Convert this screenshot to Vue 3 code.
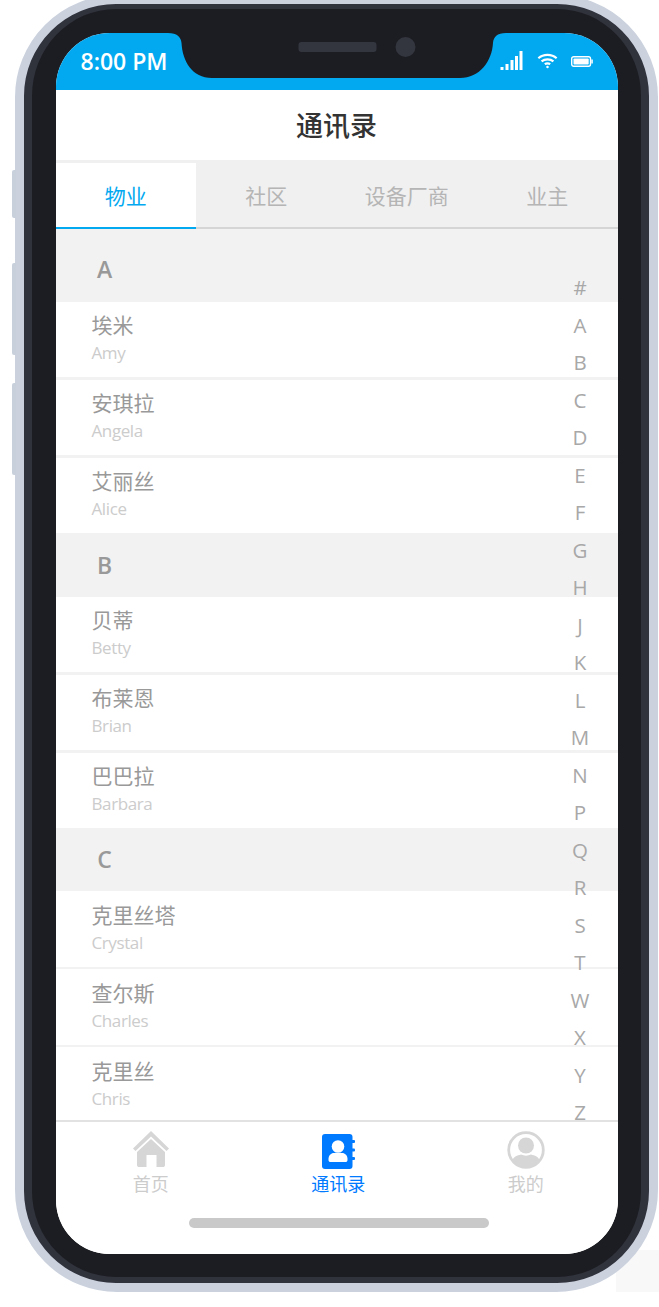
<template>
  <div class="page">
    <div class="corner-patch"></div>
    <div class="phone">
      <span class="side-btn mute"></span>
      <span class="side-btn vol-up"></span>
      <span class="side-btn vol-down"></span>
      <div class="bezel">
        <div class="screen">
          <div class="status">
            <span class="time">8:00 PM</span>
            <svg class="notch" viewBox="0 0 562 46" width="562" height="46">
              <path fill="#1c1d22" d="M112 0C121 0 125 4 125.5 10C126.5 28 136 45 156 45L404 45C424 45 436 28 437 10C437.5 4 441 0 450 0Z" />
              <rect x="242.5" y="9" width="78" height="10" rx="3" fill="#33353f" />
              <circle cx="349.5" cy="14" r="10" fill="#33353f" />
            </svg>
            <div class="status-icons">
              <svg width="23" height="20" viewBox="0 0 23 20" fill="#fff">
                <rect x="0.5" y="16" width="3" height="3" />
                <rect x="5.5" y="13" width="3" height="6" />
                <rect x="10.5" y="9" width="3" height="10" />
                <rect x="15" y="5" width="3" height="14" />
                <rect x="19.5" y="0" width="3" height="19" />
              </svg>
              <svg class="wifi" width="21" height="16" viewBox="0 0 23 17" fill="none" stroke="#fff" stroke-width="2.4">
                <path d="M1.5 5.5C7 0.5 16 0.5 21.5 5.5" />
                <path d="M5 9C8.5 6 14.5 6 18 9" />
                <path d="M8.5 12C10.3 10.8 12.7 10.8 14.5 12" />
                <circle cx="11.5" cy="15" r="1.4" fill="#fff" stroke="none" />
              </svg>
              <svg class="battery" width="22" height="11" viewBox="0 0 22 11">
                <rect x="0.7" y="0.7" width="18.8" height="9.6" rx="2" fill="none" stroke="#fff" stroke-width="1.4" />
                <rect x="2.5" y="2.5" width="15.2" height="6" rx="0.8" fill="#fff" />
                <rect x="20.3" y="3.5" width="1.5" height="4" fill="#fff" />
              </svg>
            </div>
          </div>

          <div class="header">通讯录</div>

          <div class="tabs">
            <div v-for="(t, i) in tabs" :key="t" class="tab" :class="{ active: i === 0 }">{{ t }}</div>
          </div>

          <div class="list">
            <section v-for="g in groups" :key="g.letter">
              <div class="group-head" :class="{ first: g.letter === 'A' }">
                <span>{{ g.letter }}</span>
              </div>
              <div v-for="p in g.people" :key="p.en" class="person" :class="{ thin: g.letter === 'C' }">
                <div class="cn">{{ p.cn }}</div>
                <div class="en">{{ p.en }}</div>
              </div>
            </section>
          </div>

          <div class="index">
            <span v-for="l in letters" :key="l">{{ l }}</span>
          </div>

          <div class="footer">
            <div class="nav">
              <div class="nav-item">
                <svg width="36" height="38" viewBox="0 0 36 38" fill="#d6d6d6">
                  <path d="M18 0L36 17.5L33.5 20L18 5.5L2.5 20L0 17.5Z" />
                  <path d="M18 8L32 21V34C32 35.5 31 36 30 36H23.5V24H13.5V36H6C5 36 4 35.5 4 34V21Z" />
                </svg>
                <span>首页</span>
              </div>
              <div class="nav-item current">
                <svg width="34" height="38" viewBox="0 0 34 38">
                  <rect x="0" y="3" width="30.5" height="35" rx="3" fill="#007aff" />
                  <rect x="29" y="9" width="4" height="3" rx="1" fill="#007aff" />
                  <rect x="29" y="17.5" width="4" height="3" rx="1" fill="#007aff" />
                  <rect x="29" y="26" width="4" height="3" rx="1" fill="#007aff" />
                  <circle cx="16" cy="15.5" r="6.3" fill="#fff" />
                  <path d="M6.5 28C6.5 24.5 9 22 12 22H20C23 22 25.5 24.5 25.5 28V29C25.5 30.5 24.5 31 23.5 31H8.5C7.5 31 6.5 30.5 6.5 29Z" fill="#fff" />
                </svg>
                <span>通讯录</span>
              </div>
              <div class="nav-item">
                <svg width="38" height="38" viewBox="0 0 38 38">
                  <circle cx="19" cy="19" r="17.3" fill="#fff" stroke="#d6d6d6" stroke-width="2.8" />
                  <circle cx="19" cy="14.5" r="8" fill="#d6d6d6" />
                  <path d="M5.5 29C7 25.5 10 24.5 14 23.5C17 25 21 25 24 23.5C28 24.5 31 25.5 32.5 29C29 33.5 24.5 35.5 19 35.5C13.5 35.5 9 33.5 5.5 29Z" fill="#d6d6d6" />
                </svg>
                <span>我的</span>
              </div>
            </div>
            <div class="home-bar"></div>
          </div>
        </div>
      </div>
    </div>
  </div>
</template>

<script setup>
const tabs = ['物业', '社区', '设备厂商', '业主']

const groups = [
  { letter: 'A', people: [{ cn: '埃米', en: 'Amy' }, { cn: '安琪拉', en: 'Angela' }, { cn: '艾丽丝', en: 'Alice' }] },
  { letter: 'B', people: [{ cn: '贝蒂', en: 'Betty' }, { cn: '布莱恩', en: 'Brian' }, { cn: '巴巴拉', en: 'Barbara' }] },
  { letter: 'C', people: [{ cn: '克里丝塔', en: 'Crystal' }, { cn: '查尔斯', en: 'Charles' }, { cn: '克里丝', en: 'Chris' }] }
]

const letters = '#ABCDEFGHJKLMNPQRSTWXYZ'.split('')
</script>

<style>
html,
body {
  background: #fff;
}
</style>

<style scoped>
.page {
  position: relative;
  width: 659px;
  height: 1307px;
  overflow: hidden;
  font-family: "Open Sans", "Noto Sans CJK SC", sans-serif;
}
.corner-patch {
  position: absolute;
  left: 616px;
  top: 1250px;
  width: 43px;
  height: 42px;
  background: #f8f8f8;
}
.phone {
  position: relative;
  box-sizing: border-box;
  width: 643px;
  height: 1297px;
  margin: -5px 0 0 15px;
  border: 9px solid #cbd2de;
  border-radius: 102px;
  background: #cbd2de;
}
.side-btn {
  position: absolute;
  left: -12px;
  width: 4px;
  background: #c8d0dc;
  border-radius: 2px 0 0 2px;
}
.mute { top: 166px; height: 48px; }
.vol-up { top: 259px; height: 92px; }
.vol-down { top: 379px; height: 92px; }
.bezel {
  box-sizing: border-box;
  height: 100%;
  padding: 24px 23.5px 23px;
  border-style: solid;
  border-color: #30323c;
  border-width: 5px 8px 6px;
  border-radius: 92px;
  background: #1c1d22;
}
.screen {
  position: relative;
  display: flex;
  flex-direction: column;
  height: 100%;
  overflow: hidden;
  border-radius: 54px;
  background: #fff;
}
.status {
  position: relative;
  flex: 0 0 57px;
  display: flex;
  align-items: center;
  justify-content: space-between;
  background: #03a9f0;
  color: #fff;
}
.time {
  margin-left: 25px;
  font-size: 23px;
  font-weight: 600;
  line-height: 57px;
}
.notch {
  position: absolute;
  left: 0;
  top: 0;
}
.status-icons {
  display: flex;
  align-items: center;
  gap: 13px;
  margin: 0 25px 2px 0;
}
.wifi {
  margin-left: 1px;
}
.battery {
  margin-top: 2px;
}
.header {
  flex: 0 0 70px;
  min-height: 0;
  text-align: center;
  font-size: 27px;
  font-weight: 500;
  line-height: 72px;
  color: #333;
}
.tabs {
  flex: 0 0 69px;
  box-sizing: border-box;
  display: grid;
  grid-template-columns: repeat(4, 1fr);
  padding-top: 3px;
  background: #f0f0f0;
  border-bottom: 2px solid #d5d5d5;
}
.tab {
  height: 66px;
  margin-bottom: -2px;
  box-sizing: border-box;
  text-align: center;
  font-size: 21px;
  line-height: 66px;
  color: #b5b5b5;
}
.tab.active {
  background: #fff;
  color: #03a9f0;
  border-bottom: 2px solid #03a9f0;
}
.list {
  flex: 1;
  min-height: 0;
  overflow: hidden;
}
.group-head {
  display: flex;
  align-items: center;
  height: 63.5px;
  padding-left: 34px;
  background: #f2f2f2;
  color: #999;
  font-size: 23px;
  font-weight: 600;
}
.group-head.first {
  height: 73px;
  box-sizing: border-box;
  align-items: flex-end;
  padding-bottom: 17px;
}
.group-head span {
  width: 30px;
  text-align: center;
}
.person {
  box-sizing: border-box;
  height: 78px;
  padding: 8px 0 0 36px;
  border-bottom: 3px solid #f2f2f2;
}
.person:last-child {
  height: 75px;
  border-bottom: 0;
}
.person.thin {
  border-bottom-width: 2px;
  padding-top: 9px;
}
.cn {
  font-size: 21px;
  line-height: 30px;
  color: #999;
}
.en {
  margin-top: 1px;
  font-size: 17px;
  line-height: 24px;
  letter-spacing: -0.4px;
  color: #ccc;
}
.index {
  position: absolute;
  top: 236px;
  right: 17.5px;
  z-index: 2;
  display: flex;
  flex-direction: column;
  width: 40px;
  text-align: center;
  font-size: 20.5px;
  line-height: 37.5px;
  color: #a8a8a8;
}
.footer {
  position: relative;
  flex: 0 0 134px;
  box-sizing: border-box;
  border-top: 2px solid #e2e2e2;
  background: #fff;
}
.nav {
  display: grid;
  grid-template-columns: repeat(3, 187.5px);
  padding: 8px 0 0 1.5px;
}
.nav-item {
  display: flex;
  flex-direction: column;
  align-items: center;
  font-size: 18px;
  line-height: 28px;
  color: #ccc;
}
.nav-item svg {
  display: block;
  height: 40px;
}
.nav-item.current {
  color: #007aff;
}
.nav-item.current svg {
  margin-left: 1px;
}
.home-bar {
  width: 300px;
  height: 10px;
  margin: 20px 0 0 133.5px;
  border-radius: 5px;
  background: #c9c9c9;
}
</style>
